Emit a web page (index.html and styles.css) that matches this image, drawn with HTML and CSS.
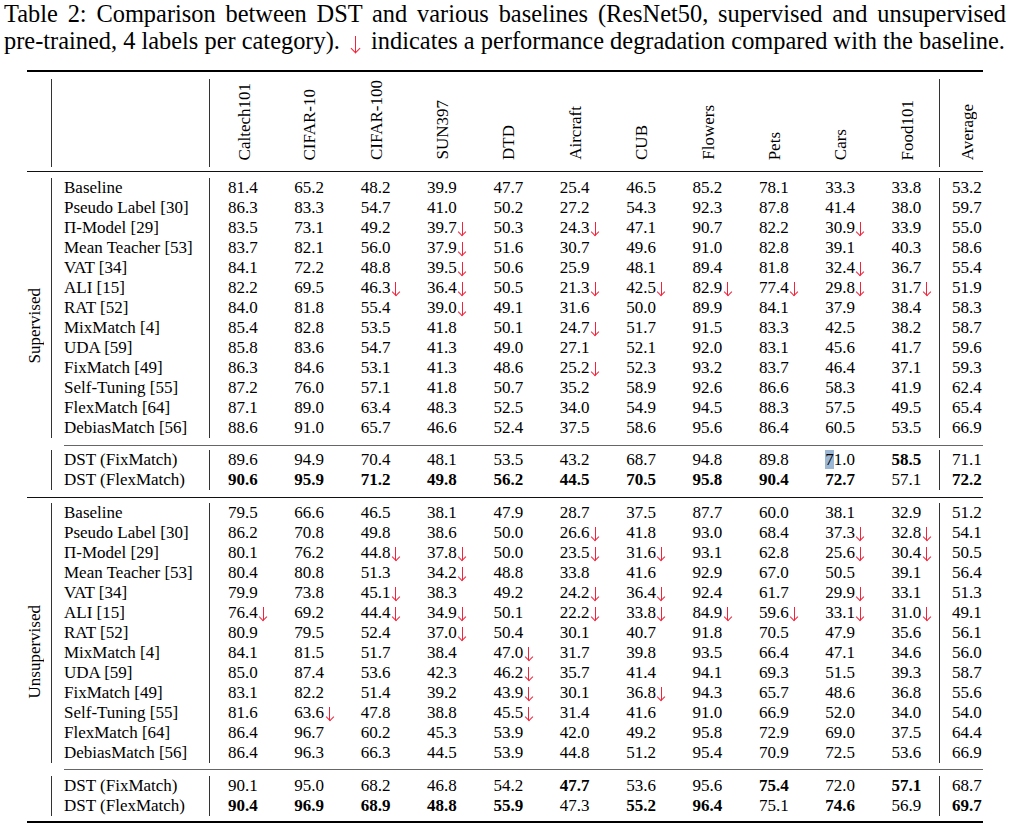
FILE: index.html
```html
<!DOCTYPE html>
<html>
<head>
<meta charset="utf-8">
<link rel="stylesheet" href="styles.css">
</head>
<body>
<div class="cap">
  <div class="ln first">Table 2: Comparison between DST and various baselines (ResNet50, supervised and unsupervised</div>
  <div class="ln">pre-trained, 4 labels per category). <i class="dn"></i> indicates a performance degradation compared with the baseline.</div>
</div>
<table class="t">
  <colgroup><col class="cA"><col class="cB"><col class="cN"><col class="cN"><col class="cN"><col class="cN"><col class="cN"><col class="cN"><col class="cN"><col class="cN"><col class="cN"><col class="cN"><col class="cN"><col class="cV"></colgroup>
  <tr class="rule top"><td colspan="14"><div></div></td></tr>
  <tr class="sp"><td colspan="14" class="s7"></td></tr>
  <tr class="hd">
    <td></td><td class="m"></td>
    <td class="f"><span class="rot">Caltech101</span></td>
    <td><span class="rot">CIFAR-10</span></td>
    <td><span class="rot">CIFAR-100</span></td>
    <td><span class="rot">SUN397</span></td>
    <td><span class="rot">DTD</span></td>
    <td><span class="rot">Aircraft</span></td>
    <td><span class="rot">CUB</span></td>
    <td><span class="rot">Flowers</span></td>
    <td><span class="rot">Pets</span></td>
    <td><span class="rot">Cars</span></td>
    <td><span class="rot">Food101</span></td>
    <td class="a"><span class="rot">Average</span></td>
  </tr>
  <tr class="sp"><td colspan="14" class="s4"></td></tr>
  <tr class="rule mid"><td colspan="14"><div></div></td></tr>
  <tr class="sp"><td colspan="14" class="s6"></td></tr>

  <tr><td rowspan="18" class="grp"><span class="rot">Supervised</span></td><td class="m">Baseline</td><td class="f">81.4</td><td>65.2</td><td>48.2</td><td>39.9</td><td>47.7</td><td>25.4</td><td>46.5</td><td>85.2</td><td>78.1</td><td>33.3</td><td>33.8</td><td class="a">53.2</td></tr>
  <tr><td class="m">Pseudo Label [30]</td><td class="f">86.3</td><td>83.3</td><td>54.7</td><td>41.0</td><td>50.2</td><td>27.2</td><td>54.3</td><td>92.3</td><td>87.8</td><td>41.4</td><td>38.0</td><td class="a">59.7</td></tr>
  <tr><td class="m">Π-Model [29]</td><td class="f">83.5</td><td>73.1</td><td>49.2</td><td>39.7<i></i></td><td>50.3</td><td>24.3<i></i></td><td>47.1</td><td>90.7</td><td>82.2</td><td>30.9<i></i></td><td>33.9</td><td class="a">55.0</td></tr>
  <tr><td class="m">Mean Teacher [53]</td><td class="f">83.7</td><td>82.1</td><td>56.0</td><td>37.9<i></i></td><td>51.6</td><td>30.7</td><td>49.6</td><td>91.0</td><td>82.8</td><td>39.1</td><td>40.3</td><td class="a">58.6</td></tr>
  <tr><td class="m">VAT [34]</td><td class="f">84.1</td><td>72.2</td><td>48.8</td><td>39.5<i></i></td><td>50.6</td><td>25.9</td><td>48.1</td><td>89.4</td><td>81.8</td><td>32.4<i></i></td><td>36.7</td><td class="a">55.4</td></tr>
  <tr><td class="m">ALI [15]</td><td class="f">82.2</td><td>69.5</td><td>46.3<i></i></td><td>36.4<i></i></td><td>50.5</td><td>21.3<i></i></td><td>42.5<i></i></td><td>82.9<i></i></td><td>77.4<i></i></td><td>29.8<i></i></td><td>31.7<i></i></td><td class="a">51.9</td></tr>
  <tr><td class="m">RAT [52]</td><td class="f">84.0</td><td>81.8</td><td>55.4</td><td>39.0<i></i></td><td>49.1</td><td>31.6</td><td>50.0</td><td>89.9</td><td>84.1</td><td>37.9</td><td>38.4</td><td class="a">58.3</td></tr>
  <tr><td class="m">MixMatch [4]</td><td class="f">85.4</td><td>82.8</td><td>53.5</td><td>41.8</td><td>50.1</td><td>24.7<i></i></td><td>51.7</td><td>91.5</td><td>83.3</td><td>42.5</td><td>38.2</td><td class="a">58.7</td></tr>
  <tr><td class="m">UDA [59]</td><td class="f">85.8</td><td>83.6</td><td>54.7</td><td>41.3</td><td>49.0</td><td>27.1</td><td>52.1</td><td>92.0</td><td>83.1</td><td>45.6</td><td>41.7</td><td class="a">59.6</td></tr>
  <tr><td class="m">FixMatch [49]</td><td class="f">86.3</td><td>84.6</td><td>53.1</td><td>41.3</td><td>48.6</td><td>25.2<i></i></td><td>52.3</td><td>93.2</td><td>83.7</td><td>46.4</td><td>37.1</td><td class="a">59.3</td></tr>
  <tr><td class="m">Self-Tuning [55]</td><td class="f">87.2</td><td>76.0</td><td>57.1</td><td>41.8</td><td>50.7</td><td>35.2</td><td>58.9</td><td>92.6</td><td>86.6</td><td>58.3</td><td>41.9</td><td class="a">62.4</td></tr>
  <tr><td class="m">FlexMatch [64]</td><td class="f">87.1</td><td>89.0</td><td>63.4</td><td>48.3</td><td>52.5</td><td>34.0</td><td>54.9</td><td>94.5</td><td>88.3</td><td>57.5</td><td>49.5</td><td class="a">65.4</td></tr>
  <tr><td class="m">DebiasMatch [56]</td><td class="f">88.6</td><td>91.0</td><td>65.7</td><td>46.6</td><td>52.4</td><td>37.5</td><td>58.6</td><td>95.6</td><td>86.4</td><td>60.5</td><td>53.5</td><td class="a">66.9</td></tr>
  <tr class="sp"><td colspan="13" class="s7"></td></tr>
  <tr class="rule cmid"><td colspan="13"><div></div></td></tr>
  <tr class="sp"><td colspan="13" class="s4"></td></tr>
  <tr><td class="m">DST (FixMatch)</td><td class="f">89.6</td><td>94.9</td><td>70.4</td><td>48.1</td><td>53.5</td><td>43.2</td><td>68.7</td><td>94.8</td><td>89.8</td><td><span class="sel">7</span>1.0</td><td><b>58.5</b></td><td class="a">71.1</td></tr>
  <tr><td class="m">DST (FlexMatch)</td><td class="f"><b>90.6</b></td><td><b>95.9</b></td><td><b>71.2</b></td><td><b>49.8</b></td><td><b>56.2</b></td><td><b>44.5</b></td><td><b>70.5</b></td><td><b>95.8</b></td><td><b>90.4</b></td><td><b>72.7</b></td><td>57.1</td><td class="a"><b>72.2</b></td></tr>

  <tr class="sp"><td colspan="14" class="s7"></td></tr>
  <tr class="rule mid"><td colspan="14"><div></div></td></tr>
  <tr class="sp"><td colspan="14" class="s5"></td></tr>

  <tr><td rowspan="18" class="grp"><span class="rot">Unsupervised</span></td><td class="m">Baseline</td><td class="f">79.5</td><td>66.6</td><td>46.5</td><td>38.1</td><td>47.9</td><td>28.7</td><td>37.5</td><td>87.7</td><td>60.0</td><td>38.1</td><td>32.9</td><td class="a">51.2</td></tr>
  <tr><td class="m">Pseudo Label [30]</td><td class="f">86.2</td><td>70.8</td><td>49.8</td><td>38.6</td><td>50.0</td><td>26.6<i></i></td><td>41.8</td><td>93.0</td><td>68.4</td><td>37.3<i></i></td><td>32.8<i></i></td><td class="a">54.1</td></tr>
  <tr><td class="m">Π-Model [29]</td><td class="f">80.1</td><td>76.2</td><td>44.8<i></i></td><td>37.8<i></i></td><td>50.0</td><td>23.5<i></i></td><td>31.6<i></i></td><td>93.1</td><td>62.8</td><td>25.6<i></i></td><td>30.4<i></i></td><td class="a">50.5</td></tr>
  <tr><td class="m">Mean Teacher [53]</td><td class="f">80.4</td><td>80.8</td><td>51.3</td><td>34.2<i></i></td><td>48.8</td><td>33.8</td><td>41.6</td><td>92.9</td><td>67.0</td><td>50.5</td><td>39.1</td><td class="a">56.4</td></tr>
  <tr><td class="m">VAT [34]</td><td class="f">79.9</td><td>73.8</td><td>45.1<i></i></td><td>38.3</td><td>49.2</td><td>24.2<i></i></td><td>36.4<i></i></td><td>92.4</td><td>61.7</td><td>29.9<i></i></td><td>33.1</td><td class="a">51.3</td></tr>
  <tr><td class="m">ALI [15]</td><td class="f">76.4<i></i></td><td>69.2</td><td>44.4<i></i></td><td>34.9<i></i></td><td>50.1</td><td>22.2<i></i></td><td>33.8<i></i></td><td>84.9<i></i></td><td>59.6<i></i></td><td>33.1<i></i></td><td>31.0<i></i></td><td class="a">49.1</td></tr>
  <tr><td class="m">RAT [52]</td><td class="f">80.9</td><td>79.5</td><td>52.4</td><td>37.0<i></i></td><td>50.4</td><td>30.1</td><td>40.7</td><td>91.8</td><td>70.5</td><td>47.9</td><td>35.6</td><td class="a">56.1</td></tr>
  <tr><td class="m">MixMatch [4]</td><td class="f">84.1</td><td>81.5</td><td>51.7</td><td>38.4</td><td>47.0<i></i></td><td>31.7</td><td>39.8</td><td>93.5</td><td>66.4</td><td>47.1</td><td>34.6</td><td class="a">56.0</td></tr>
  <tr><td class="m">UDA [59]</td><td class="f">85.0</td><td>87.4</td><td>53.6</td><td>42.3</td><td>46.2<i></i></td><td>35.7</td><td>41.4</td><td>94.1</td><td>69.3</td><td>51.5</td><td>39.3</td><td class="a">58.7</td></tr>
  <tr><td class="m">FixMatch [49]</td><td class="f">83.1</td><td>82.2</td><td>51.4</td><td>39.2</td><td>43.9<i></i></td><td>30.1</td><td>36.8<i></i></td><td>94.3</td><td>65.7</td><td>48.6</td><td>36.8</td><td class="a">55.6</td></tr>
  <tr><td class="m">Self-Tuning [55]</td><td class="f">81.6</td><td>63.6<i></i></td><td>47.8</td><td>38.8</td><td>45.5<i></i></td><td>31.4</td><td>41.6</td><td>91.0</td><td>66.9</td><td>52.0</td><td>34.0</td><td class="a">54.0</td></tr>
  <tr><td class="m">FlexMatch [64]</td><td class="f">86.4</td><td>96.7</td><td>60.2</td><td>45.3</td><td>53.9</td><td>42.0</td><td>49.2</td><td>95.8</td><td>72.9</td><td>69.0</td><td>37.5</td><td class="a">64.4</td></tr>
  <tr><td class="m">DebiasMatch [56]</td><td class="f">86.4</td><td>96.3</td><td>66.3</td><td>44.5</td><td>53.9</td><td>44.8</td><td>51.2</td><td>95.4</td><td>70.9</td><td>72.5</td><td>53.6</td><td class="a">66.9</td></tr>
  <tr class="sp"><td colspan="13" class="s6"></td></tr>
  <tr class="rule cmid"><td colspan="13"><div></div></td></tr>
  <tr class="sp"><td colspan="13" class="s6"></td></tr>
  <tr><td class="m">DST (FixMatch)</td><td class="f">90.1</td><td>95.0</td><td>68.2</td><td>46.8</td><td>54.2</td><td><b>47.7</b></td><td>53.6</td><td>95.6</td><td><b>75.4</b></td><td>72.0</td><td><b>57.1</b></td><td class="a">68.7</td></tr>
  <tr><td class="m">DST (FlexMatch)</td><td class="f"><b>90.4</b></td><td><b>96.9</b></td><td><b>68.9</b></td><td><b>48.8</b></td><td><b>55.9</b></td><td>47.3</td><td><b>55.2</b></td><td><b>96.4</b></td><td>75.1</td><td><b>74.6</b></td><td>56.9</td><td class="a"><b>69.7</b></td></tr>

  <tr class="sp"><td colspan="14" class="s5"></td></tr>
  <tr class="rule top"><td colspan="14"><div></div></td></tr>
</table>
</body>
</html>
```
FILE: styles.css
```css
html, body {
  margin: 0;
  padding: 0;
  background: #fff;
}
body {
  font-family: "Liberation Serif", "Times New Roman", serif;
  color: #000;
  width: 1010px;
}
.cap {
  padding: 0 4px 0 4px;
  font-size: 24.4px;
  line-height: 27px;
}
.ln {
  white-space: nowrap;
}
.ln.first {
  white-space: normal;
  text-align: justify;
  text-align-last: justify;
}
i {
  font-style: normal;
}
.dn, .t i {
  display: inline-block;
  position: relative;
}
.dn::before, .t i::before {
  content: "";
  position: absolute;
  background: #f2243c;
  width: 1px;
}
.dn::after, .t i::after {
  content: "";
  position: absolute;
  border-right: 1px solid #f2243c;
  border-bottom: 1px solid #f2243c;
  transform: rotate(45deg);
}
.dn {
  width: 15px;
  height: 18px;
  margin: 0 2px;
  vertical-align: -5px;
}
.dn::before { left: 7px; top: 0; height: 17px; }
.dn::after { left: 4px; bottom: 2px; width: 6px; height: 6px; }
.t i {
  width: 11px;
  height: 14px;
  vertical-align: -3px;
}
.t i::before { left: 5px; top: 0; height: 13px; }
.t i::after { left: 2.5px; bottom: 1.5px; width: 5px; height: 5px; }

.t {
  margin: 16px 0 0 27px;
  width: 956px;
  table-layout: fixed;
  border-collapse: separate;
  border-spacing: 0;
  font-size: 17px;
  line-height: 20px;
}
.cA { width: 24px; }
.cB { width: 158px; }
.cN { width: 66.36px; }
.cV { width: 44px; }
.t td {
  padding: 0 0 0 19px;
  height: 20px;
  white-space: nowrap;
  vertical-align: middle;
}
.t td.m {
  padding-left: 12px;
  border-left: 1px solid #333;
}
.t td.f {
  padding-left: 18px;
  border-left: 1px solid #333;
}
.t td.a {
  padding-left: 12px;
  border-left: 1px solid #333;
}
.t td.grp {
  padding: 0 0 16px 0;
  vertical-align: middle;
}
.t td.grp .rot {
  margin-left: -1px;
}
.t b { font-weight: bold; }
.sel { background: #9bb7d4; }
.rule td, .sp td {
  padding: 0;
  height: auto;
  border: none;
}
.rule div { background: #000; }
.rule.top div { height: 2px; }
.rule.mid div { height: 1px; background: #111; }
.rule.cmid div { height: 1px; background: #666; margin-left: 13px; }
.sp td.s4 { height: 4px; }
.sp td.s5 { height: 5px; }
.sp td.s6 { height: 6px; }
.sp td.s7 { height: 7px; }
.hd td {
  height: 81px;
  vertical-align: bottom;
  padding: 0 0 7px 0;
  text-align: left;
}
.hd td.m, .hd td.f, .hd td.a { padding: 0 0 7px 0; }
.hd td .rot { margin-left: 26px; }
.hd td.a .rot { margin-left: 19px; }
.rot {
  display: block;
  width: 17px;
  writing-mode: vertical-rl;
  transform: rotate(180deg);
  line-height: 17px;
  white-space: nowrap;
}
```
